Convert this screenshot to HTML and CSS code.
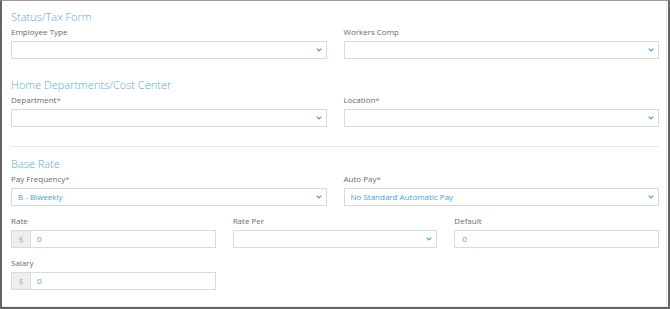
FILE: index.html
```html
<!DOCTYPE html>
<html lang="en">

<head>
    <meta charset="UTF-8">
    <meta name="viewport" content="width=device-width, initial-scale=1.0">
    <title>Employee Pay Setup</title>
    <link rel="stylesheet" href="styles.css">
</head>

<body>
    <div class="frame">
        <div class="panel">
            <!-- Status / tax -->
            <div class="section">
                <h2 class="section-title">Status/Tax Form</h2>
                <div class="row cols-2">
                    <div class="field">
                        <label class="field-label">Employee Type</label>
                        <div class="select">
                            <span class="select-value"></span>
                            <svg class="chevron" viewBox="0 0 6 4"><polyline points="0.7,0.7 3,3 5.3,0.7" /></svg>
                        </div>
                    </div>
                    <div class="field">
                        <label class="field-label">Workers Comp</label>
                        <div class="select">
                            <span class="select-value"></span>
                            <svg class="chevron" viewBox="0 0 6 4"><polyline points="0.7,0.7 3,3 5.3,0.7" /></svg>
                        </div>
                    </div>
                </div>
            </div>

            <!-- Departments -->
            <div class="section">
                <h2 class="section-title">Home Departments/Cost Center</h2>
                <div class="row cols-2">
                    <div class="field">
                        <label class="field-label">Department<span class="req">*</span></label>
                        <div class="select">
                            <span class="select-value"></span>
                            <svg class="chevron" viewBox="0 0 6 4"><polyline points="0.7,0.7 3,3 5.3,0.7" /></svg>
                        </div>
                    </div>
                    <div class="field">
                        <label class="field-label">Location<span class="req">*</span></label>
                        <div class="select">
                            <span class="select-value"></span>
                            <svg class="chevron" viewBox="0 0 6 4"><polyline points="0.7,0.7 3,3 5.3,0.7" /></svg>
                        </div>
                    </div>
                </div>
            </div>

            <hr class="divider">

            <!-- Base rate -->
            <div class="section">
                <h2 class="section-title">Base Rate</h2>
                <div class="row cols-2">
                    <div class="field">
                        <label class="field-label">Pay Frequency<span class="req">*</span></label>
                        <div class="select">
                            <span class="select-value">B - Biweekly</span>
                            <svg class="chevron" viewBox="0 0 6 4"><polyline points="0.7,0.7 3,3 5.3,0.7" /></svg>
                        </div>
                    </div>
                    <div class="field">
                        <label class="field-label">Auto Pay<span class="req">*</span></label>
                        <div class="select">
                            <span class="select-value">No Standard Automatic Pay</span>
                            <svg class="chevron" viewBox="0 0 6 4"><polyline points="0.7,0.7 3,3 5.3,0.7" /></svg>
                        </div>
                    </div>
                </div>
                <div class="row cols-3">
                    <div class="field">
                        <label class="field-label">Rate</label>
                        <div class="input-group">
                            <span class="addon">$</span>
                            <span class="input">0</span>
                        </div>
                    </div>
                    <div class="field">
                        <label class="field-label">Rate Per</label>
                        <div class="select">
                            <span class="select-value"></span>
                            <svg class="chevron" viewBox="0 0 6 4"><polyline points="0.7,0.7 3,3 5.3,0.7" /></svg>
                        </div>
                    </div>
                    <div class="field">
                        <label class="field-label">Default</label>
                        <span class="input input-plain">0</span>
                    </div>
                </div>
                <div class="row cols-3">
                    <div class="field">
                        <label class="field-label">Salary</label>
                        <div class="input-group">
                            <span class="addon">$</span>
                            <span class="input">0</span>
                        </div>
                    </div>
                </div>
            </div>
        </div>
    </div>
</body>

</html>
```

FILE: styles.css
```css
html,
body {
    margin: 0;
    padding: 0;
    background-color: #ffffff;
}

body {
    font-family: "Open Sans", "Liberation Sans", sans-serif;
}

.frame {
    box-sizing: border-box;
    width: 670px;
    height: 309px;
    border-top: 1px solid #9a9a9a;
    border-left: 2px solid #666;
    border-right: 2px solid #666;
    border-bottom: 2px solid #666;
    display: flex;
}

.panel {
    flex: 1;
    margin-right: 1px;
    padding: 8px 7px 0 9px;
    border-right: 1px solid #e8e8e8;
    border-bottom: 1px solid #e8e8e8;
}

.section {
    margin-bottom: 18px;
}

.section-title {
    margin: 0 0 1px;
    font-size: 11px;
    line-height: 16px;
    font-weight: 300;
    color: #55aad8;
}

.row {
    display: grid;
    column-gap: 17px;
    margin-bottom: 9px;
}

.row:last-child {
    margin-bottom: 0;
}

.cols-2 {
    grid-template-columns: 1fr 1fr;
}

.cols-3 {
    grid-template-columns: 1fr 1fr 1fr;
}

.field-label {
    display: block;
    margin-bottom: 3px;
    font-size: 8px;
    line-height: 12px;
    color: #6a6a6a;
}

.req {
    color: #e0625e;
}

.select,
.input-group,
.input-plain {
    box-sizing: border-box;
    height: 18px;
}

.select {
    display: flex;
    align-items: center;
    justify-content: space-between;
    padding: 0 4px 0 6px;
    border: 1px solid #dadada;
    background-color: #fff;
}

.select-value,
.input {
    font-size: 8px;
    line-height: 16px;
    color: #4aa0d8;
}

.chevron {
    width: 6px;
    height: 4px;
    fill: none;
    stroke: #4aa0d8;
    stroke-width: 1.2;
}

.input-group {
    display: flex;
    border: 1px solid #dadada;
}

.addon {
    width: 18px;
    font-size: 8px;
    line-height: 16px;
    text-align: center;
    color: #aaa;
    background-color: #eee;
    border-right: 1px solid #dadada;
}

.input {
    flex: 1;
    padding-left: 6px;
}

.input-plain {
    display: block;
    border: 1px solid #dadada;
    padding-left: 7px;
}

.divider {
    margin: 19px 0 9px;
    border: 0;
    border-top: 1px solid #e8e8e8;
    height: 0;
}
```
